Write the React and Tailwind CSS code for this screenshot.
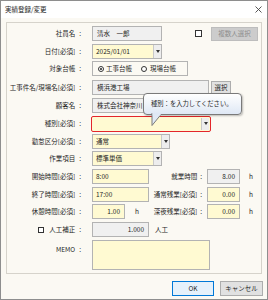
import React from "react";

const Arrow = () => (
  <div className="w-[8px] h-full border-l border-[#c9c9c9] bg-[#ededed] flex items-center justify-center shrink-0">
    <svg width="4" height="3" viewBox="0 0 4 3"><path d="M0 0H4L2 3Z" fill="#333" /></svg>
  </div>
);

const Label = ({ children, className = "" }) => (
  <div className={"w-[85px] pr-[11px] flex items-center justify-end shrink-0 " + className}>
    <span>{children}</span>
    <span className="ml-[4px]">:</span>
  </div>
);

const RLabel = ({ children }) => (
  <div className="w-[58px] pr-[5px] flex items-center justify-end shrink-0 h-full">
    <span className="whitespace-nowrap">{children}</span>
    <span className="ml-[3px]">:</span>
  </div>
);

const Yellow = "bg-[#fffad2]";
const Gray = "bg-[#f0f0f0]";

export default function App() {
  return (
    <div className="relative w-[268px] h-[300px] bg-[#fbf9f3] border border-[#8e8e8e] flex flex-col font-['Noto_Sans_CJK_JP',sans-serif] text-[6.5px] text-[#1e1e1e] leading-none overflow-hidden">
      <div className="h-[17px] bg-white flex items-center justify-between pl-[4px] pr-[5px] shrink-0">
        <span>実績登録/変更</span>
        <svg width="7" height="7" viewBox="0 0 7 7"><path d="M0.5 0.5L6.5 6.5M6.5 0.5L0.5 6.5" stroke="#444" strokeWidth="0.9" /></svg>
      </div>

      <div className="mx-[5px] mt-[4px] h-[252px] border border-[#d6d3cb] shrink-0 flex flex-col pt-[3px]">
        {/* 社員名 */}
        <div className="flex h-[15px] items-center">
          <Label>社員名</Label>
          <div className={"w-[70px] h-[15px] border border-[#b3b3b3] flex items-center px-[4px] " + Gray}>清水　一郎</div>
          <div className="ml-[33px] w-[7px] h-[7px] border border-[#333] bg-white" />
          <div className="ml-[9px] w-[47px] h-[14px] border border-[#bdbdbd] bg-[#cccccc] text-[#8d8d8d] flex items-center justify-center">複数人選択</div>
        </div>
        {/* 日付 */}
        <div className="flex h-[15px] items-center mt-[3px]">
          <Label>日付[必須]</Label>
          <div className={"w-[70px] h-[15px] border border-[#b3b3b3] flex items-center " + Yellow}>
            <span className="flex-1 pl-[3px]">2025/01/01</span>
            <Arrow />
          </div>
        </div>
        {/* 対象台帳 */}
        <div className="flex h-[15px] items-center mt-[2px]">
          <Label>対象台帳</Label>
          <div className="w-[96px] h-[15px] border border-[#b3b3b3] flex items-center pl-[5px] bg-[#fbf9f3]">
            <div className="w-[6px] h-[6px] rounded-full border border-[#333] flex items-center justify-center bg-white">
              <div className="w-[2px] h-[2px] rounded-full bg-[#222]" />
            </div>
            <span className="ml-[2px]">工事台帳</span>
            <div className="ml-[9px] w-[6px] h-[6px] rounded-full border border-[#333] bg-white" />
            <span className="ml-[3px]">現場台帳</span>
          </div>
        </div>
        {/* 工事件名 */}
        <div className="flex h-[15px] items-center mt-[4px]">
          <Label>工事件名/現場名[必須]</Label>
          <div className={"w-[117px] h-[15px] border border-[#b3b3b3] flex items-center px-[4px] " + Gray}>横浜港工場</div>
          <div className="ml-[2px] w-[20px] h-[14px] border border-[#adadad] bg-[#e1e1e1] flex items-center justify-center">選択</div>
        </div>
        {/* 顧客名 */}
        <div className="flex h-[15px] items-center mt-[3px]">
          <Label>顧客名</Label>
          <div className={"w-[139px] h-[15px] border border-[#b3b3b3] flex items-center px-[4px] whitespace-nowrap overflow-hidden " + Gray}>株式会社神奈川</div>
        </div>
        {/* 種別 */}
        <div className="flex h-[15px] items-center mt-[3px]">
          <Label>種別[必須]</Label>
          <div className={"ml-[-1px] w-[120px] h-[16px] border border-[#e3262b] rounded-[2px] flex items-center p-[1px] " + Yellow}>
            <span className="flex-1" />
            <div className="w-[8px] h-full bg-[#ededed] border-l border-[#c9c9c9] flex items-center justify-center">
              <svg width="4" height="3" viewBox="0 0 4 3"><path d="M0 0H4L2 3Z" fill="#333" /></svg>
            </div>
          </div>
        </div>
        {/* 勤怠区分 */}
        <div className="flex h-[15px] items-center mt-[3px]">
          <Label>勤怠区分[必須]</Label>
          <div className={"w-[78px] h-[15px] border border-[#b3b3b3] flex items-center " + Yellow}>
            <span className="flex-1 pl-[3px]">通常</span>
            <Arrow />
          </div>
        </div>
        {/* 作業項目 */}
        <div className="flex h-[15px] items-center mt-[2px]">
          <Label>作業項目</Label>
          <div className={"w-[70px] h-[15px] border border-[#b3b3b3] flex items-center " + Yellow}>
            <span className="flex-1 pl-[3px]">標準単価</span>
            <Arrow />
          </div>
        </div>
        {/* 開始時間 */}
        <div className="flex h-[15px] items-center mt-[3px]">
          <Label>開始時間[必須]</Label>
          <div className={"w-[57px] h-[15px] border border-[#b3b3b3] flex items-center px-[3px] " + Yellow}>8:00</div>
          <RLabel>就業時間</RLabel>
          <div className={"w-[33px] h-[15px] border border-[#b3b3b3] flex items-center justify-end px-[4px] " + Gray}>8.00</div>
          <span className="ml-[9px]">h</span>
        </div>
        {/* 終了時間 */}
        <div className="flex h-[15px] items-center mt-[3px]">
          <Label>終了時間[必須]</Label>
          <div className={"w-[57px] h-[15px] border border-[#b3b3b3] flex items-center px-[3px] " + Yellow}>17:00</div>
          <RLabel>通常残業[必須]</RLabel>
          <div className={"w-[33px] h-[15px] border border-[#b3b3b3] flex items-center justify-end px-[4px] " + Yellow}>0.00</div>
          <span className="ml-[9px]">h</span>
        </div>
        {/* 休憩時間 */}
        <div className="flex h-[15px] items-center mt-[2px]">
          <Label>休憩時間[必須]</Label>
          <div className="w-[57px] h-[15px] flex items-center shrink-0">
            <div className={"w-[33px] h-[15px] border border-[#b3b3b3] flex items-center justify-end px-[4px] " + Yellow}>1.00</div>
            <span className="ml-[10px]">h</span>
          </div>
          <RLabel>深夜残業[必須]</RLabel>
          <div className={"w-[33px] h-[15px] border border-[#b3b3b3] flex items-center justify-end px-[4px] " + Yellow}>0.00</div>
          <span className="ml-[9px]">h</span>
        </div>
        {/* 人工補正 */}
        <div className="flex h-[15px] items-center mt-[3px]">
          <div className="w-[85px] pr-[11px] flex items-center shrink-0 pl-[31px]">
            <div className="w-[6px] h-[6px] border border-[#333] bg-white" />
            <span className="ml-auto">人工補正</span>
            <span className="ml-[4px]">:</span>
          </div>
          <div className={"w-[57px] h-[15px] border border-[#b3b3b3] flex items-center justify-end px-[4px] " + Gray}>1.000</div>
          <span className="ml-[6px]">人工</span>
        </div>
        {/* MEMO */}
        <div className="flex items-start mt-[3px]">
          <Label className="pt-[6px]">MEMO</Label>
          <div className={"w-[118px] h-[30px] border border-[#b3b3b3] " + Yellow} />
        </div>
      </div>

      <div className="flex justify-end gap-[6px] mt-[7px] pr-[4px]">
        <div className="w-[42px] h-[15px] border border-[#0078d7] bg-[#e5f1fb] flex items-center justify-center">OK</div>
        <div className="w-[43px] h-[15px] border border-[#adadad] bg-[#e1e1e1] flex items-center justify-center">キャンセル</div>
      </div>

      {/* Tooltip */}
      <div className="absolute left-[142px] top-[92px] w-[99px] h-[22px] rounded-[4px] border border-[#7a7a7a] bg-gradient-to-b from-white to-[#dfe8f5] flex items-center pl-[7px] text-[6.3px] shadow-[1px_1px_2px_rgba(0,0,0,0.25)]">
        種別：を入力してください。
      </div>
      <svg className="absolute left-[150px] top-[112px]" width="12" height="14" viewBox="0 0 12 14">
        <path d="M1 0 L1 12.5 L10 1.5" fill="#e0e9f5" stroke="#7a7a7a" strokeWidth="1" />
        <rect x="1.5" y="0" width="8" height="2.5" fill="#dfe8f5" />
      </svg>
    </div>
  );
}
